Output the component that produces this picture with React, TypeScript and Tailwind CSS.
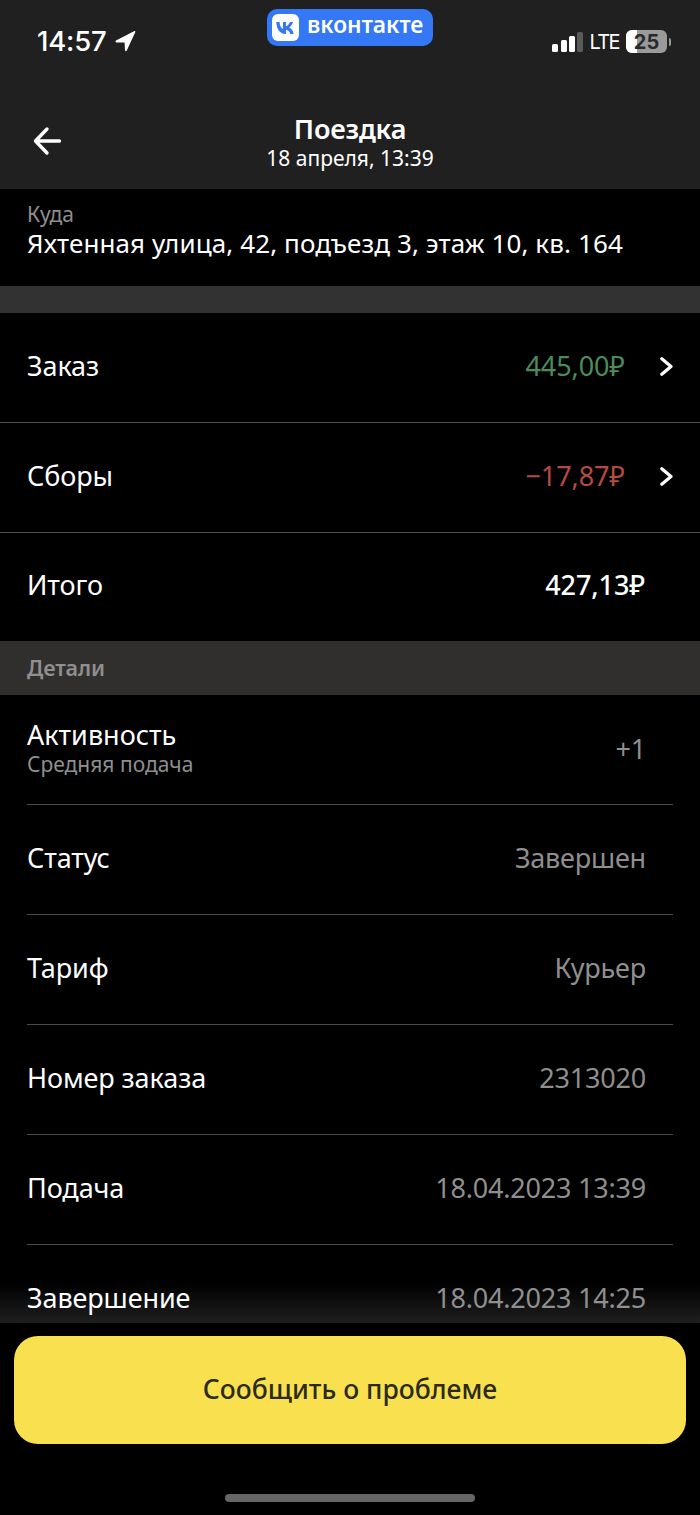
import React from "react";

const F = { fontFamily: '"Noto Sans", "Open Sans", sans-serif' };

function Chevron() {
  return (
    <svg width="13" height="19" viewBox="0 0 13 19" className="ml-[35px]">
      <path d="M1.8 1.8 L11 9.5 L1.8 17.2" fill="none" stroke="#fff" strokeWidth="3.2" strokeLinecap="round" strokeLinejoin="round" />
    </svg>
  );
}

function MoneyRow({ label, value, color, chevron, border, height }: { label: string; value: string; color: string; chevron?: boolean; border?: boolean; height: string }) {
  return (
    <div className={`${height} shrink-0 flex items-center justify-between pl-[27px] pb-[3px] ${chevron ? "pr-[27px]" : "pr-[55px]"} ${border ? "border-b border-[#505050]" : ""}`}>
      <span className="text-[27px] tracking-[-0.1px] text-white">{label}</span>
      <div className="flex items-center">
        <span className={`text-[27px] tracking-[-0.1px] ${color}`}>{value}</span>
        {chevron && <Chevron />}
      </div>
    </div>
  );
}

function DetailRow({ label, value }: { label: string; value: string }) {
  return (
    <div className="mx-[27px] h-[110px] shrink-0 flex items-center justify-between pb-[3px] pr-[27px] border-b border-[#4a4a4a]">
      <span className="text-[27px] tracking-[-0.1px] text-white">{label}</span>
      <span className="text-[27px] tracking-[-0.2px] text-[#8f8f8f]">{value}</span>
    </div>
  );
}

export default function App() {
  return (
    <div className="w-[700px] h-[1515px] bg-black overflow-hidden flex flex-col" style={F}>
      <header className="h-[189px] shrink-0 bg-[#212020] flex flex-col">
        <div className="h-[84px] relative flex items-start justify-between pl-[37px] pr-[29px] pt-[24px]">
          <div className="flex items-center gap-[8px]">
            <span className="text-[27.5px] leading-[34px] font-medium text-white tracking-[-0.2px]" style={{ fontFamily: '"Inter", sans-serif' }}>14:57</span>
            <svg width="21" height="22" viewBox="0 0 21 22">
              <path d="M1 10.6 L19 1.2 C20 0.7 20.6 1.3 20.2 2.2 L11.8 20.4 C11.2 21.6 10.2 21.4 10 20.2 L9.6 12.6 L1.6 12.6 C0.4 12.5 0.2 11.1 1 10.6 Z" fill="#fff" />
            </svg>
          </div>
          <div className="absolute left-[267px] top-[9px] w-[166px] h-[37px] rounded-[10px] bg-[#3478f6] flex items-center pl-[5px]">
            <div className="w-[27px] h-[27px] rounded-[6px] bg-white flex items-center justify-center">
              <svg width="22" height="14" viewBox="0 0 20 13">
                <path d="M1 1 H4 C4.2 5 5.8 7 7.2 7.5 V1 H10 V4.8 C11.5 4.6 13 3 13.6 1 H16.5 C16 3.4 14.3 5.2 13 6 C14.3 6.6 16.4 8.2 17.2 12 H14 C13.4 10 11.8 8.4 10 8.2 V12 H9.4 C4.4 12 1.3 8 1 1 Z" fill="#3478f6" />
              </svg>
            </div>
            <span className="ml-[8px] text-[22.8px] leading-none font-semibold text-white pb-[5px]">вконтакте</span>
          </div>
          <div className="flex items-center mt-[6px]">
            <div className="flex items-end gap-[2.4px] h-[20px] mr-[6px]">
              <div className="w-[6px] h-[8px] rounded-[1.5px] bg-white" />
              <div className="w-[6px] h-[12px] rounded-[1.5px] bg-white" />
              <div className="w-[6px] h-[16px] rounded-[1.5px] bg-white" />
              <div className="w-[6px] h-[20px] rounded-[1.5px] bg-[#5a5a5a]" />
            </div>
            <span className="text-[20px] leading-none text-white mr-[7px] tracking-[-1.6px]" style={{ fontFamily: '"Inter", sans-serif' }}>LTE</span>
            <div className="relative w-[41px] h-[23px] rounded-[6px] bg-[#9a9a9a] overflow-hidden flex items-center justify-center">
              <div className="absolute left-0 top-0 bottom-0 w-[11px] bg-white" />
              <span className="relative text-[20px] font-bold leading-none text-[#2a2a2a]" style={{ fontFamily: '"Inter", sans-serif' }}>25</span>
            </div>
            <div className="w-[2px] h-[8px] ml-[2px] rounded-r-[2px] bg-[#9a9a9a]" />
          </div>
        </div>
        <div className="relative flex-1 flex flex-col items-center pt-[26px]">
          <svg width="30" height="30" viewBox="0 0 30 30" className="absolute left-[32px] top-[42px]">
            <path d="M27.5 15 H4 M15 3 L3.5 15 L15 27" fill="none" stroke="#fff" strokeWidth="3.4" strokeLinecap="round" strokeLinejoin="round" />
          </svg>
          <div className="text-[27px] leading-[37px] font-semibold tracking-[-0.2px] text-white">Поездка</div>
          <div className="text-[21px] leading-[22px] text-white">18 апреля, 13:39</div>
        </div>
      </header>

      <div className="h-[97px] shrink-0 pl-[27px] pt-[12px]">
        <div className="text-[21px] leading-[26px] text-[#8f8f8f]">Куда</div>
        <div className="text-[26px] leading-[33px] text-white tracking-[0.1px]">Яхтенная улица, 42, подъезд 3, этаж 10, кв. 164</div>
      </div>

      <div className="h-[27px] shrink-0 bg-[#323232]" />

      <MoneyRow height="h-[110px]" label="Заказ" value="445,00₽" color="text-[#4a8c5c]" chevron border />
      <MoneyRow height="h-[110px]" label="Сборы" value="−17,87₽" color="text-[#b54a45]" chevron border />
      <MoneyRow height="h-[108px]" label="Итого" value="427,13₽" color="text-white font-medium" />

      <div className="h-[54px] shrink-0 bg-[#302f2e] flex items-center pl-[27px]">
        <span className="text-[21.5px] font-semibold tracking-[-0.1px] text-[#8f8f8f]">Детали</span>
      </div>

      <div className="mx-[27px] h-[110px] shrink-0 flex items-center justify-between pb-[5px] pr-[27px] border-b border-[#4a4a4a]">
        <div className="flex flex-col">
          <span className="text-[27px] leading-[33px] text-white">Активность</span>
          <span className="text-[21px] leading-[26px] text-[#8f8f8f]">Средняя подача</span>
        </div>
        <span className="mt-[4px] text-[27px] tracking-[-0.2px] text-[#8f8f8f]">+1</span>
      </div>
      <DetailRow label="Статус" value="Завершен" />
      <DetailRow label="Тариф" value="Курьер" />
      <DetailRow label="Номер заказа" value="2313020" />
      <DetailRow label="Подача" value="18.04.2023 13:39" />

      <div className="relative flex-1 min-h-0">
        <div className="absolute left-0 right-0 top-[38px] h-[40px] bg-gradient-to-b from-transparent to-[#1f1f1f]" />
        <div className="relative h-[78px] mx-[27px] flex items-start justify-between pr-[27px] pt-[35px]">
          <span className="text-[27px] leading-[36px] tracking-[-0.1px] text-white">Завершение</span>
          <span className="text-[27px] leading-[36px] tracking-[-0.2px] text-[#8f8f8f]">18.04.2023 14:25</span>
        </div>
        <div className="px-[14px] pt-[13px]">
          <div className="h-[108px] rounded-[24px] bg-[#f8e04e] flex items-center justify-center">
            <span className="text-[26.5px] font-medium text-[#2b2a1c]">Сообщить о проблеме</span>
          </div>
        </div>
        <div className="mx-auto mt-[50px] w-[250px] h-[8px] rounded-full bg-[#666666]" />
      </div>
    </div>
  );
}
